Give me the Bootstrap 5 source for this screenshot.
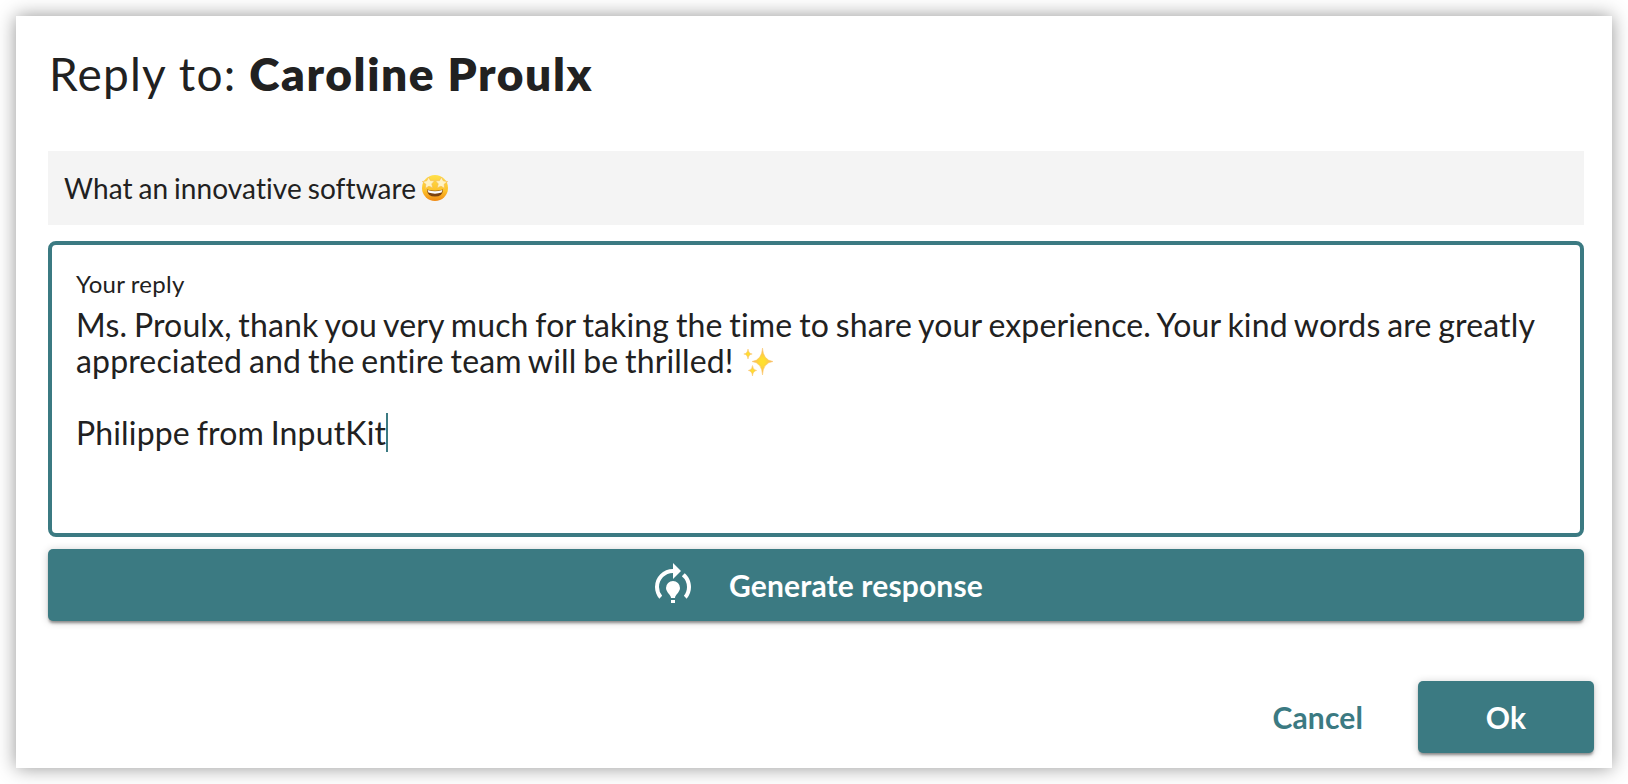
<!DOCTYPE html>
<html lang="en">
<head>
  <meta charset="UTF-8" />
  <meta name="viewport" content="width=device-width, initial-scale=1" />
  <title>Reply</title>
  <link href="https://cdn.jsdelivr.net/npm/bootstrap@5.3.3/dist/css/bootstrap.min.css" rel="stylesheet" />
  <style>
    body {
      font-family: Lato, sans-serif;
      font-variant-ligatures: none;
      letter-spacing: .15px;
      word-spacing: -1.55px;
      color: #212121;
      height: 784px;
      padding: 16px;
      overflow: hidden;
    }
    .dialog-box {
      box-shadow: 0 0 18px rgba(0, 0, 0, .42);
      padding: 0 18px 15px 32px;
    }
    .dialog-body {
      width: 1536px;
    }
    .dialog-title {
      font-size: 46px;
      line-height: 56px;
      letter-spacing: 1.2px;
      word-spacing: 0;
      padding: 30px 0 0 1px;
      height: 135px;
    }
    .title-name {
      font-weight: 800;
      letter-spacing: 1.6px;
    }
    .review {
      background: #f4f4f4;
      height: 74px;
      padding: 0 16px;
      font-size: 28px;
      letter-spacing: .11px;
    }
    .reply-field {
      border: 4px solid #3b7a82;
      border-radius: 8px;
      height: 296px;
      margin: 16px 0 12px;
      padding: 23px 24px 0;
    }
    .reply-label {
      font-size: 24px;
      line-height: 32px;
      letter-spacing: .3px;
      word-spacing: -.5px;
    }
    .reply-text {
      font-size: 32px;
      line-height: 36px;
      padding-top: 7px;
    }
    .caret {
      display: inline-block;
      width: 2px;
      height: 39px;
      margin: -10px 0;
      vertical-align: 3px;
      background: #3b7a82;
    }
    .btn-teal {
      --bs-btn-color: #fff;
      --bs-btn-bg: #3b7a82;
      --bs-btn-hover-color: #fff;
      --bs-btn-hover-bg: #326970;
      box-shadow: 0 3px 3px -1px rgba(0, 0, 0, .4), 0 1px 8px rgba(0, 0, 0, .2);
    }
    .btn-teal, .btn-flat {
      height: 72px;
      border: 0;
      border-radius: 5px;
      font-size: 30px;
      font-weight: 700;
      letter-spacing: .15px;
    }
    .btn-flat {
      --bs-btn-color: #3b7a82;
      padding: 0 15px;
    }
    .btn-generate {
      gap: 32px;
    }
    .btn-ok {
      width: 176px;
    }
    .emoji-face {
      margin-left: 5px;
    }
    .emoji-sparkles {
      margin: -4px 0 -4px 2px;
      vertical-align: 0;
    }
  </style>
</head>
<body>
  <div class="dialog-box bg-white h-100 d-flex flex-column justify-content-between">
    <div class="dialog-body">
      <h1 class="dialog-title fw-normal m-0">Reply to: <strong class="title-name">Caroline Proulx</strong></h1>

      <div class="review d-flex align-items-center">
        What an innovative software
        <svg class="emoji-face" width="28" height="28" viewBox="0 0 28 28">
          <defs>
            <linearGradient id="face" x1="0" y1="0" x2="0" y2="1">
              <stop offset="0" stop-color="#ffe04a" />
              <stop offset=".6" stop-color="#fdc22b" />
              <stop offset="1" stop-color="#f08a14" />
            </linearGradient>
          </defs>
          <circle cx="14" cy="14" r="13" fill="url(#face)" />
          <path d="M6 15.400Q14 18 22 15.400Q21.600 22.600 14 22.600T6 15.400z" fill="#7a4210" />
          <path d="M6.600 16Q14 18.600 21.400 16L20.600 18.600Q14 20.800 7.400 18.600z" fill="#fff" />
          <g fill="#fff3c4" stroke="#f5bd50" stroke-width=".7">
            <path d="M7.600 3l1.900 3.600 4.100.2-2.800 3.100 1.100 4-3.900-1.700-3.600 2.200.4-4.200-3.400-2.600 4.300-.8z" />
            <path d="M20.400 3l-1.900 3.600-4.100.2 2.800 3.100-1.100 4 3.900-1.700 3.600 2.200-.4-4.200 3.400-2.600-4.300-.8z" />
          </g>
        </svg>
      </div>

      <div class="reply-field">
        <div class="reply-label">Your reply</div>
        <div class="reply-text text-nowrap">
          <div>Ms. Proulx, thank you very much for taking the time to share your experience. Your kind words are greatly</div>
          <div>appreciated and the entire team will be thrilled!
            <svg class="emoji-sparkles" width="32" height="32" viewBox="0 0 32 32">
              <defs>
                <radialGradient id="glow">
                  <stop offset=".2" stop-color="#ffdf2e" />
                  <stop offset=".6" stop-color="#fdc94a" />
                  <stop offset="1" stop-color="#f5a878" />
                </radialGradient>
              </defs>
              <g fill="url(#glow)" stroke="#fbc965" stroke-width=".5">
                <path d="M20.500 3Q21.200 15.200 31 16.500Q21.200 17.800 20.500 30Q19.800 17.800 10 16.500Q19.800 15.200 20.500 3z" />
                <path d="M6 4Q6.600 8.600 10.200 9Q6.600 9.400 6 14Q5.400 9.400 1.800 9Q5.400 8.600 6 4z" />
                <path d="M10.500 20.500Q11 25 14.700 25.500Q11 26 10.500 31Q10 26 6.300 25.500Q10 25 10.500 20.500z" />
              </g>
            </svg>
          </div>
          <div>&nbsp;</div>
          <div>Philippe from InputKit<span class="caret"></span></div>
        </div>
      </div>

      <button class="btn btn-teal btn-generate w-100 d-flex align-items-center justify-content-center">
        <svg width="48" height="48" viewBox="0 0 24 24" fill="currentColor">
          <path d="M15.500 13.500c0 2-2.500 3.500-2.500 5h-2c0-1.500-2.500-3-2.500-5a3.500 3.500 0 0 1 7 0zM13 19.500h-2V21h2zM19 13c0 1.680-.59 3.210-1.580 4.420l1.420 1.420A8.960 8.960 0 0 0 21 13c0-2.740-1.230-5.190-3.160-6.840l-1.420 1.420A6.990 6.990 0 0 1 19 13zM16 5l-4-4v3a9 9 0 0 0-9 9c0 2.230.82 4.270 2.160 5.840l1.420-1.420A6.960 6.960 0 0 1 5 13c0-3.860 3.140-7 7-7v3z" />
        </svg>
        Generate response
      </button>
    </div>

    <div class="d-flex justify-content-end align-items-center gap-4">
      <button class="btn btn-flat me-3">Cancel</button>
      <button class="btn btn-teal btn-ok">Ok</button>
    </div>
  </div>

  <script src="https://cdn.jsdelivr.net/npm/bootstrap@5.3.3/dist/js/bootstrap.bundle.min.js"></script>
</body>
</html>
